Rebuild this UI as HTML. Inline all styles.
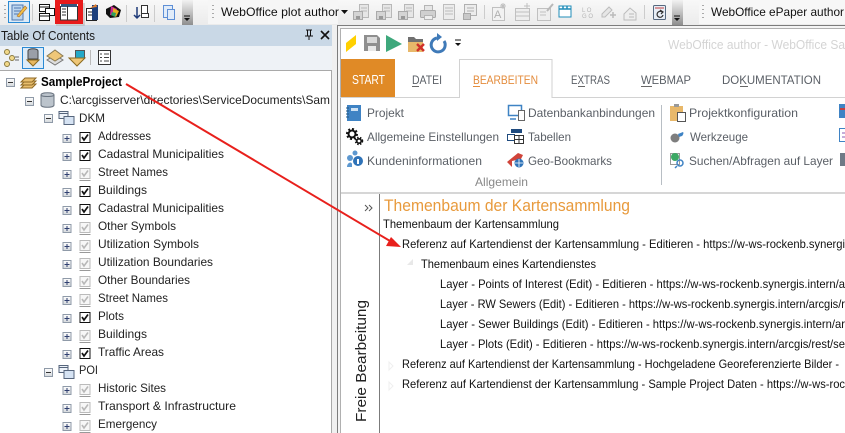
<!DOCTYPE html>
<html><head><meta charset="utf-8"><style>
html,body{margin:0;padding:0;background:#fff;width:845px;height:433px;overflow:hidden}
svg{display:block}
text{font-family:"Liberation Sans",sans-serif;font-size:12px;fill:#1a1a1a}
.r{fill:#5a5f66}
.t{fill:#222}
</style></head><body>
<svg width="845" height="433" viewBox="0 0 845 433" xmlns="http://www.w3.org/2000/svg">
<defs>
<linearGradient id="tb" x1="0" y1="0" x2="0" y2="1"><stop offset="0" stop-color="#f8f8f8"/><stop offset="1" stop-color="#ebebeb"/></linearGradient>
<linearGradient id="ov" x1="0" y1="0" x2="0" y2="1"><stop offset="0" stop-color="#f2f2f2"/><stop offset="1" stop-color="#8e8e8e"/></linearGradient>
<linearGradient id="ex" x1="0" y1="0" x2="0" y2="1"><stop offset="0" stop-color="#fff"/><stop offset="1" stop-color="#d4d8dc"/></linearGradient>
<g id="plus"><rect x=".5" y=".5" width="8" height="8" fill="url(#ex)" stroke="#8f9aa8"/><path d="M2 4.500h5M4.500 2v5" stroke="#2f3f70"/></g>
<g id="minus"><rect x=".5" y=".5" width="8" height="8" fill="url(#ex)" stroke="#8f9aa8"/><path d="M2 4.500h5" stroke="#333"/></g>
<g id="on"><rect x=".5" y=".5" width="10" height="10" fill="#fff" stroke="#111"/><path d="M2.500 5l2 3 4-5.500" fill="none" stroke="#111" stroke-width="1.700"/></g>
<g id="off"><rect x=".5" y=".5" width="10" height="10" fill="#f7f7f7" stroke="#bbb"/><path d="M2.500 5l2 3 4-5.500" fill="none" stroke="#b8b8b8" stroke-width="1.600"/><path d="M0 12.500h11" stroke="#999"/></g>
<g id="grp"><rect x=".5" y=".5" width="9" height="7" fill="#eef3fa" stroke="#56657c"/><path d="M0 2.500h10" stroke="#56657c"/><rect x="5.500" y="5.500" width="10" height="8" fill="#d6e3f3" stroke="#56657c"/></g>
<g id="dis"><rect x="6.500" y=".5" width="9" height="13" fill="#e6e6e6" stroke="#b8b8b8"/><path d="M8 4h6M8 7h6" stroke="#bbb"/><rect x=".5" y="7.500" width="9" height="8" fill="#d4d4d4" stroke="#aaa"/><rect x="3" y="12" width="4" height="3" fill="#999"/></g>
</defs>

<!-- background -->
<rect width="845" height="433" fill="#f0f0f0"/>
<rect width="845" height="25" fill="url(#tb)"/>
<rect x="0" y="25" width="332" height="21" fill="#c9d8e6"/>
<rect x="0" y="46" width="332" height="25" fill="#eef2f6"/>
<rect x="0" y="70" width="332" height="363" fill="#fff"/>
<path d="M0 70.500h332M331.500 70v363" stroke="#a9a9a9"/>

<!-- top toolbar left -->
<path d="M5 5v1M5 9v1M5 13v1M5 17v1" stroke="#aaa" stroke-width="2"/>
<rect x="8.500" y="1.500" width="21" height="21" fill="#dcebf8" stroke="#2a8ad4"/>
<path d="M12 5h11v15H12z" fill="#bcd6ef" stroke="#5078b0"/><path d="M14 8h7M14 11h7M14 14h5" stroke="#5078b0"/><path d="M17 16l8-10 2 2-8 9z" fill="#f1c24b" stroke="#b0702a" stroke-width=".6"/>
<path d="M32.500 4v17" stroke="#ccc"/>
<g fill="#fff" stroke="#111"><rect x="39.500" y="4.500" width="10" height="7"/><rect x="45.500" y="8.500" width="9" height="7"/><rect x="39.500" y="13.500" width="10" height="7"/></g>
<path d="M39 7h10M39 16h10" stroke="#111"/>
<rect x="55" y="0" width="28" height="24" fill="#e81b1b"/>
<rect x="60" y="4" width="18" height="16" fill="#fff"/>
<path d="M61 5.500h16" stroke="#34587e" stroke-width="3"/><path d="M67.500 6v14M60.500 6v14h17V6" fill="none" stroke="#333"/><path d="M62 9h4M62 12h4M62 15h4" stroke="#333"/>
<path d="M84 3v22H56" fill="none" stroke="#aaa" stroke-width="1.500" opacity=".6"/>
<rect x="86.500" y="8.500" width="10" height="12" fill="#fff" stroke="#222"/><path d="M88 12h7M88 15h7" stroke="#222"/><rect x="92" y="5" width="6" height="15" fill="#1c3f7c"/><path d="M90 8l6-4 1 3" fill="#e08030"/>
<path d="M106 9l8-4 7 5-2 7-9 1-4-4z" fill="#111"/><path d="M111 6l6 3-2 7-5-1z" fill="#c82a90"/><path d="M113 8l6 3-3 6-3-2z" fill="#e8b020"/><path d="M112 12l4 1-1 4-4-2z" fill="#2f9f60"/>
<path d="M126.500 5v17" stroke="#ccc"/>
<path d="M137 7v11M134 15l3 3 3-3" fill="none" stroke="#1e3a78" stroke-width="1.500"/><rect x="141.500" y="5.500" width="6" height="8" fill="#fff" stroke="#333"/><rect x="141.500" y="13.500" width="7" height="4" fill="#fff" stroke="#333"/>
<path d="M154.500 5v17" stroke="#ccc"/>
<rect x="163.500" y="5.500" width="9" height="12" fill="#e1ecf9" stroke="#5e8fd6"/><rect x="167.500" y="9.500" width="7" height="10" fill="#e1ecf9" stroke="#5e8fd6"/>
<rect x="182" y="0" width="11" height="25" fill="url(#ov)"/><path d="M184 16h6" stroke="#111"/><path d="M184 18h6l-3 3z" fill="#111"/>
<rect x="208" y="0" width="130" height="24" fill="#f6f6f6"/>
<path d="M213 5v1M213 9v1M213 13v1M213 17v1" stroke="#aaa" stroke-width="2"/>
<text x="221" y="16" textLength="118" lengthAdjust="spacingAndGlyphs" style="fill:#111">WebOffice plot author</text>
<path d="M341 10h7l-3.500 4z" fill="#111"/>

<!-- top toolbar grey icons -->
<use href="#dis" x="353" y="4"/><use href="#dis" x="376" y="4"/><use href="#dis" x="398" y="4"/>
<rect x="424.500" y="5.500" width="8" height="5" fill="#e6e6e6" stroke="#b5b5b5"/><rect x="420.500" y="10.500" width="15" height="7" rx="1" fill="#d0d0d0" stroke="#aaa"/><rect x="424.500" y="15.500" width="8" height="4" fill="#eee" stroke="#b5b5b5"/>
<rect x="443.500" y="4.500" width="11" height="15" fill="#ececec" stroke="#bdbdbd"/><path d="M445 8h8M445 11h8M445 14h8" stroke="#bdbdbd"/>
<rect x="464.500" y="4.500" width="12" height="11" fill="#ececec" stroke="#b0b0b0"/><path d="M467 8h7M467 11h7" stroke="#b0b0b0"/><rect x="463.500" y="13.500" width="7" height="6" fill="#c8c8c8" stroke="#a8a8a8"/>
<path d="M484.500 5v14" stroke="#ccc"/>
<rect x="492.500" y="7.500" width="12" height="13" fill="#f2f2f2" stroke="#c0c0c0"/><text x="494" y="18" style="font-size:11px;fill:#b0b0b0">A</text><path d="M503 3v6M500 6h6M501 4l4 4M505 4l-4 4" stroke="#c0c0c0"/>
<rect x="515.500" y="8.500" width="14" height="12" fill="#eee" stroke="#c0c0c0"/><path d="M516 12h13M516 16h13" stroke="#c0c0c0"/><path d="M527 3v6M524 6h6" stroke="#c0c0c0"/>
<rect x="537.500" y="8.500" width="13" height="12" fill="#eee" stroke="#c0c0c0"/><path d="M540 12h6M540 15h6" stroke="#c0c0c0"/><path d="M547 11l6-7" stroke="#b8b8b8" stroke-width="2"/>
<rect x="559" y="6" width="12" height="11" fill="#fff" stroke="#1f8cb8"/><path d="M559 9h12M563 6v3M567 6v3" stroke="#1f8cb8" stroke-width="1.500"/>
<text x="582" y="12" style="font-size:6px;fill:#b5b5b5">L O</text><text x="582" y="18" style="font-size:6px;fill:#b5b5b5">G O</text>
<path d="M602 14l7-7 3 3-7 7h-3z" fill="#e6e6e6" stroke="#bcbcbc"/><path d="M613 12v6M610 15h6" stroke="#bbb" stroke-width="1.500"/>
<path d="M624 14l6-6 6 5v7h-12z" fill="#eee" stroke="#bcbcbc"/><path d="M629 14h5M629 17h5" stroke="#bbb"/>
<path d="M644.500 5v14" stroke="#ccc"/>
<rect x="653.500" y="5.500" width="12" height="14" rx="1" fill="#e8eef6" stroke="#56687e"/><path d="M655 8h9" stroke="#c34040"/><path d="M662 12a3 3 0 1 0 1 3M660 10l3 2-2 2" fill="none" stroke="#333" stroke-width="1.200"/>
<rect x="672" y="0" width="11" height="25" fill="url(#ov)"/><path d="M674 16h6" stroke="#111"/><path d="M674 18h6l-3 3z" fill="#111"/>
<rect x="699" y="0" width="146" height="24" fill="#f7f7f7"/>
<path d="M703 5v1M703 9v1M703 13v1M703 17v1" stroke="#aaa" stroke-width="2"/>
<text x="711" y="16" textLength="133" lengthAdjust="spacingAndGlyphs" style="fill:#111">WebOffice ePaper author</text>

<!-- TOC header -->
<text x="1" y="40" textLength="94" lengthAdjust="spacingAndGlyphs" style="font-size:12.500px;fill:#1a1a1a">Table Of Contents</text>
<path d="M306 30h6M307.500 30v6h3v-6M305 36h8M309 36v4" fill="none" stroke="#111"/>
<path d="M321 31l8 8M329 31l-8 8" stroke="#111" stroke-width="1.600"/>

<!-- TOC toolbar -->
<circle cx="7" cy="52" r="2.500" fill="#f2d98a" stroke="#8a7a40"/><circle cx="7" cy="64" r="2.500" fill="#f2d98a" stroke="#8a7a40"/><circle cx="12" cy="58" r="2.500" fill="#f2d98a" stroke="#8a7a40"/><path d="M15 57h4M15 60h4" stroke="#666"/>
<rect x="22.500" y="47.500" width="21" height="21" fill="#dcebf8" stroke="#2a8ad4"/>
<path d="M28 51c0-3 10-3 10 0v8H28z" fill="#9a9fa8" stroke="#444"/><path d="M27 60h12l-6 6z" fill="#e8b860" stroke="#8a6a20"/>
<path d="M47 60l8 5 8-5-8-5z" fill="#ddd" stroke="#777"/><path d="M47 56l8-6 8 6-8 5z" fill="#efc778" stroke="#8a7a50"/>
<rect x="75.500" y="50.500" width="9" height="8" fill="#23a8c8" stroke="#555"/><path d="M69 58h16l-8 8z" fill="#efc778" stroke="#8a6a20"/>
<path d="M90.500 50v15" stroke="#bbb"/>
<rect x="98.500" y="50.500" width="12" height="14" fill="#fff" stroke="#333"/><path d="M100 54h2M104 54h5M100 57.500h2M104 57.500h5M100 61h2M104 61h5" stroke="#444"/>

<!-- tree -->
<use href="#minus" x="6" y="78"/>
<g fill="#e9bf6e" stroke="#8f6a25"><path d="M21 88l4-4h11l-4 4z"/><path d="M21 85l4-4h11l-4 4z"/><path d="M21 82l4-4h11l-4 4z"/></g>
<text x="41" y="86" textLength="81" lengthAdjust="spacingAndGlyphs" style="font-weight:bold;fill:#000;font-size:12.500px">SampleProject</text>
<use href="#minus" x="25" y="97"/>
<path d="M41 95c0-3 13-3 13 0v10c0 3-13 3-13 0z" fill="#bcc4cc" stroke="#6a7480"/><path d="M41 95c0 2 13 2 13 0" fill="none" stroke="#6a7480"/>
<text x="60" y="104" textLength="270" lengthAdjust="spacingAndGlyphs" class="t">C:\arcgisserver\directories\ServiceDocuments\Sam</text>

<use href="#minus" x="44" y="114"/><use href="#grp" x="58.500" y="111"/>
<text x="79" y="122" textLength="26" lengthAdjust="spacingAndGlyphs" class="t">DKM</text>

<use href="#plus" x="62.500" y="134"/><use href="#on" x="79.500" y="132"/><text x="98" y="140" textLength="53" lengthAdjust="spacingAndGlyphs" class="t">Addresses</text>
<use href="#plus" x="62.500" y="152"/><use href="#on" x="79.500" y="150"/><text x="98" y="158" textLength="126" lengthAdjust="spacingAndGlyphs" class="t">Cadastral Municipalities</text>
<use href="#plus" x="62.500" y="170"/><use href="#off" x="79.500" y="168"/><text x="98" y="176" textLength="70" lengthAdjust="spacingAndGlyphs" class="t">Street Names</text>
<use href="#plus" x="62.500" y="188"/><use href="#on" x="79.500" y="186"/><text x="98" y="194" textLength="49" lengthAdjust="spacingAndGlyphs" class="t">Buildings</text>
<use href="#plus" x="62.500" y="206"/><use href="#on" x="79.500" y="204"/><text x="98" y="212" textLength="126" lengthAdjust="spacingAndGlyphs" class="t">Cadastral Municipalities</text>
<use href="#plus" x="62.500" y="224"/><use href="#off" x="79.500" y="222"/><text x="98" y="230" textLength="78" lengthAdjust="spacingAndGlyphs" class="t">Other Symbols</text>
<use href="#plus" x="62.500" y="242"/><use href="#off" x="79.500" y="240"/><text x="98" y="248" textLength="101" lengthAdjust="spacingAndGlyphs" class="t">Utilization Symbols</text>
<use href="#plus" x="62.500" y="260"/><use href="#off" x="79.500" y="258"/><text x="98" y="266" textLength="115" lengthAdjust="spacingAndGlyphs" class="t">Utilization Boundaries</text>
<use href="#plus" x="62.500" y="278"/><use href="#off" x="79.500" y="276"/><text x="98" y="284" textLength="92" lengthAdjust="spacingAndGlyphs" class="t">Other Boundaries</text>
<use href="#plus" x="62.500" y="296"/><use href="#off" x="79.500" y="294"/><text x="98" y="302" textLength="70" lengthAdjust="spacingAndGlyphs" class="t">Street Names</text>
<use href="#plus" x="62.500" y="314"/><use href="#on" x="79.500" y="312"/><text x="98" y="320" textLength="26" lengthAdjust="spacingAndGlyphs" class="t">Plots</text>
<use href="#plus" x="62.500" y="332"/><use href="#off" x="79.500" y="330"/><text x="98" y="338" textLength="49" lengthAdjust="spacingAndGlyphs" class="t">Buildings</text>
<use href="#plus" x="62.500" y="350"/><use href="#on" x="79.500" y="348"/><text x="98" y="356" textLength="66" lengthAdjust="spacingAndGlyphs" class="t">Traffic Areas</text>
<use href="#minus" x="44" y="368"/><use href="#grp" x="58.500" y="365"/><text x="79" y="374" textLength="19" lengthAdjust="spacingAndGlyphs" class="t">POI</text>
<use href="#plus" x="62.500" y="386"/><use href="#off" x="79.500" y="384"/><text x="98" y="392" textLength="68" lengthAdjust="spacingAndGlyphs" class="t">Historic Sites</text>
<use href="#plus" x="62.500" y="404"/><use href="#off" x="79.500" y="402"/><text x="98" y="410" textLength="138" lengthAdjust="spacingAndGlyphs" class="t">Transport &amp; Infrastructure</text>
<use href="#plus" x="62.500" y="422"/><use href="#off" x="79.500" y="420"/><text x="98" y="428" textLength="59" lengthAdjust="spacingAndGlyphs" class="t">Emergency</text>

<!-- right window -->
<rect x="338" y="26" width="507" height="407" fill="#f4f4f4"/>
<path d="M337.500 433V25.500H845" fill="none" stroke="#7c7c7c"/>
<path d="M340.500 433V28.500H845" fill="none" stroke="#b0b0b0"/>
<rect x="341" y="29" width="504" height="404" fill="#fff"/>
<path d="M346 43l10-8v9l-10 8z" fill="#ffd000"/>
<path d="M364 35h13l3 3v13h-16z" fill="#8f8f8f"/><rect x="367" y="37" width="10" height="6" fill="#d9d9d9"/><rect x="368" y="46" width="8" height="5" fill="#e8e8e8"/>
<path d="M386 35l16 9-16 8z" fill="#3ea87c"/>
<path d="M408 42h15v10h-15z" fill="#e8b86a"/><path d="M408 37h6l2 2h7v3h-15z" fill="#707070"/>
<path d="M417 44l7 7M424 44l-7 7" stroke="#d0302a" stroke-width="2.400"/>
<path d="M437 38a7 7 0 1 0 7 3" fill="none" stroke="#3f7ab8" stroke-width="3"/><path d="M437 33l5 4-5 4z" fill="#3f7ab8"/>
<path d="M455 40h6" stroke="#111"/><path d="M455 43h6l-3 3z" fill="#111"/>
<text x="668" y="49" textLength="177" lengthAdjust="spacingAndGlyphs" style="font-size:13px;fill:#d4d4d4">WebOffice author - WebOffice Sa</text>

<!-- tabs -->
<rect x="341" y="59" width="54" height="39" fill="#e08a26"/>
<text x="352" y="84" textLength="33" lengthAdjust="spacingAndGlyphs" style="font-size:12.500px;fill:#fff">START</text>
<text x="412" y="84" textLength="30" lengthAdjust="spacingAndGlyphs" class="r">DATEI</text><path d="M412 86.500h7" stroke="#666"/>
<path d="M340 97.500h119.500V59.500h92.500v38H845" fill="#fff" stroke="#d2d2d2"/>
<text x="473" y="84" textLength="65" lengthAdjust="spacingAndGlyphs" style="fill:#e48c3c">BEARBEITEN</text><path d="M473 86.500h7" stroke="#e48c3c"/>
<text x="571" y="84" textLength="39" lengthAdjust="spacingAndGlyphs" class="r">EXTRAS</text><path d="M578 86.500h7" stroke="#666"/>
<text x="641" y="84" textLength="50" lengthAdjust="spacingAndGlyphs" class="r">WEBMAP</text><path d="M641 86.500h11" stroke="#666"/>
<text x="722" y="84" textLength="99" lengthAdjust="spacingAndGlyphs" class="r">DOKUMENTATION</text><path d="M740 86.500h8" stroke="#666"/>

<!-- ribbon -->
<rect x="347" y="105" width="14" height="16" fill="#3f83c4"/><path d="M349 108h-3M349 111h-3M349 114h-3M349 117h-3" stroke="#26577f"/><rect x="351" y="108" width="7" height="3" fill="#cfe2f3"/>
<text x="367" y="117" textLength="37" lengthAdjust="spacingAndGlyphs" class="r">Projekt</text>
<circle cx="352" cy="134" r="3.500" fill="none" stroke="#111" stroke-width="2"/><circle cx="352" cy="134" r="5" fill="none" stroke="#111" stroke-width="2" stroke-dasharray="2 1.900"/><circle cx="359" cy="141" r="2.200" fill="none" stroke="#111" stroke-width="1.600"/><circle cx="359" cy="141" r="3.500" fill="none" stroke="#111" stroke-width="1.500" stroke-dasharray="1.500 1.400"/>
<text x="367" y="141" textLength="132" lengthAdjust="spacingAndGlyphs" class="r">Allgemeine Einstellungen</text>
<circle cx="358" cy="161" r="5" fill="#2f73b8"/><circle cx="350" cy="158" r="3" fill="#5d98d0"/><circle cx="355" cy="153" r="2.500" fill="#5d98d0"/><path d="M347 167c0-4 4-6 5-3v3z" fill="#5d98d0"/><path d="M358 159v5" stroke="#fff" stroke-width="2"/>
<text x="367" y="165" textLength="115" lengthAdjust="spacingAndGlyphs" class="r">Kundeninformationen</text>

<rect x="508.500" y="105.500" width="13" height="10" fill="none" stroke="#3f83c4" stroke-width="1.500"/><rect x="518.500" y="110.500" width="6" height="10" fill="#fff" stroke="#666"/><path d="M510 119h6" stroke="#3f83c4" stroke-width="1.500"/>
<text x="528" y="117" textLength="127" lengthAdjust="spacingAndGlyphs" class="r">Datenbankanbindungen</text>
<rect x="507.500" y="134.500" width="7" height="6" fill="#fff" stroke="#1f4b7f"/><rect x="514.500" y="135.500" width="9" height="8" fill="#fff" stroke="#333"/><rect x="511" y="129" width="11" height="4" fill="#1f4b7f"/><path d="M514 139.500h9M519 136v7" stroke="#333"/>
<text x="528" y="141" textLength="43" lengthAdjust="spacingAndGlyphs" class="r">Tabellen</text>
<path d="M507 162l11-9 5 2-2 4-9 2v6z" fill="#d0443a"/><circle cx="519" cy="163" r="4.500" fill="#2f73b8"/><path d="M515 163h8M519 159v8" stroke="#fff" stroke-width=".8"/>
<text x="528" y="165" textLength="84" lengthAdjust="spacingAndGlyphs" class="r">Geo-Bookmarks</text>

<path d="M661.500 105v80" stroke="#b8bec4"/>
<rect x="670" y="106" width="13" height="15" fill="#e8b86a"/><rect x="674" y="104" width="5" height="3" fill="#999"/><rect x="677.500" y="112.500" width="8" height="9" fill="#fff" stroke="#555"/>
<text x="689" y="117" textLength="109" lengthAdjust="spacingAndGlyphs" class="r">Projektkonfiguration</text>
<circle cx="675" cy="138" r="4.500" fill="#7e7e7e"/><path d="M678 134l5-2c1 1 0 3-1 4l-3 1z" fill="#3f83c4"/>
<text x="690" y="141" textLength="58" lengthAdjust="spacingAndGlyphs" class="r">Werkzeuge</text>
<rect x="670.500" y="153.500" width="9" height="11" fill="#fff" stroke="#999"/><circle cx="675" cy="157" r="4" fill="#3ba864"/><circle cx="680" cy="163" r="3" fill="none" stroke="#3f83c4" stroke-width="1.500"/><path d="M677 166l-2 2" stroke="#3f83c4" stroke-width="1.500"/>
<text x="689" y="165" textLength="144" lengthAdjust="spacingAndGlyphs" class="r">Suchen/Abfragen auf Layer</text>
<rect x="839" y="104" width="6" height="14" fill="#3f83c4"/><rect x="840" y="108" width="5" height="2" fill="#c34040"/>
<rect x="839.500" y="128.500" width="6" height="13" fill="#fff" stroke="#3f83c4"/><path d="M842 133h3M842 137h3" stroke="#8a5bb0"/>
<rect x="840" y="153" width="5" height="13" fill="#6f7a86"/>
<text x="475" y="186" textLength="53" lengthAdjust="spacingAndGlyphs" style="fill:#888">Allgemein</text>
<rect x="341" y="192" width="504" height="2" fill="#d6d6d6"/>

<!-- content -->
<path d="M379.500 194v239" stroke="#7b7b7b"/>
<path d="M365 205l3 3-3 3M369 205l3 3-3 3" fill="none" stroke="#555"/>
<text transform="translate(366 422) rotate(-90)" x="0" y="0" textLength="122" lengthAdjust="spacingAndGlyphs" style="font-size:15px;fill:#222">Freie Bearbeitung</text>
<text x="384" y="211" textLength="246" lengthAdjust="spacingAndGlyphs" style="font-size:17px;fill:#e89a3c">Themenbaum der Kartensammlung</text>
<text x="383" y="228" textLength="176" lengthAdjust="spacingAndGlyphs" style="fill:#111">Themenbaum der Kartensammlung</text>
<path d="M388 245l6-6v6z" fill="#e8e8e8"/>
<text x="402" y="248" textLength="443" lengthAdjust="spacingAndGlyphs" style="fill:#111">Referenz auf Kartendienst der Kartensammlung - Editieren - https://w-ws-rockenb.synergi</text>
<path d="M407 265l6-6v6z" fill="#e8e8e8"/>
<text x="421" y="268" textLength="175" lengthAdjust="spacingAndGlyphs" style="fill:#111">Themenbaum eines Kartendienstes</text>
<text x="440" y="288" textLength="405" lengthAdjust="spacingAndGlyphs" style="fill:#111">Layer - Points of Interest (Edit) - Editieren - https://w-ws-rockenb.synergis.intern/a</text>
<text x="440" y="308" textLength="405" lengthAdjust="spacingAndGlyphs" style="fill:#111">Layer - RW Sewers (Edit) - Editieren - https://w-ws-rockenb.synergis.intern/arcgis/r</text>
<text x="440" y="328" textLength="405" lengthAdjust="spacingAndGlyphs" style="fill:#111">Layer - Sewer Buildings (Edit) - Editieren - https://w-ws-rockenb.synergis.intern/ar</text>
<text x="440" y="348" textLength="405" lengthAdjust="spacingAndGlyphs" style="fill:#111">Layer - Plots (Edit) - Editieren - https://w-ws-rockenb.synergis.intern/arcgis/rest/se</text>
<path d="M389 362l4 4-4 4z" fill="none" stroke="#efefef"/>
<text x="402" y="368" textLength="437" lengthAdjust="spacingAndGlyphs" style="fill:#111">Referenz auf Kartendienst der Kartensammlung - Hochgeladene Georeferenzierte Bilder -</text>
<path d="M389 382l4 4-4 4z" fill="none" stroke="#efefef"/>
<text x="402" y="388" textLength="443" lengthAdjust="spacingAndGlyphs" style="fill:#111">Referenz auf Kartendienst der Kartensammlung - Sample Project Daten - https://w-ws-roc</text>

<!-- red arrow -->
<path d="M126 84L390 241" stroke="#e8201c" stroke-width="2" fill="none"/>
<path d="M401 247l-15-1 5-9z" fill="#e8201c"/>
</svg>
</body></html>
